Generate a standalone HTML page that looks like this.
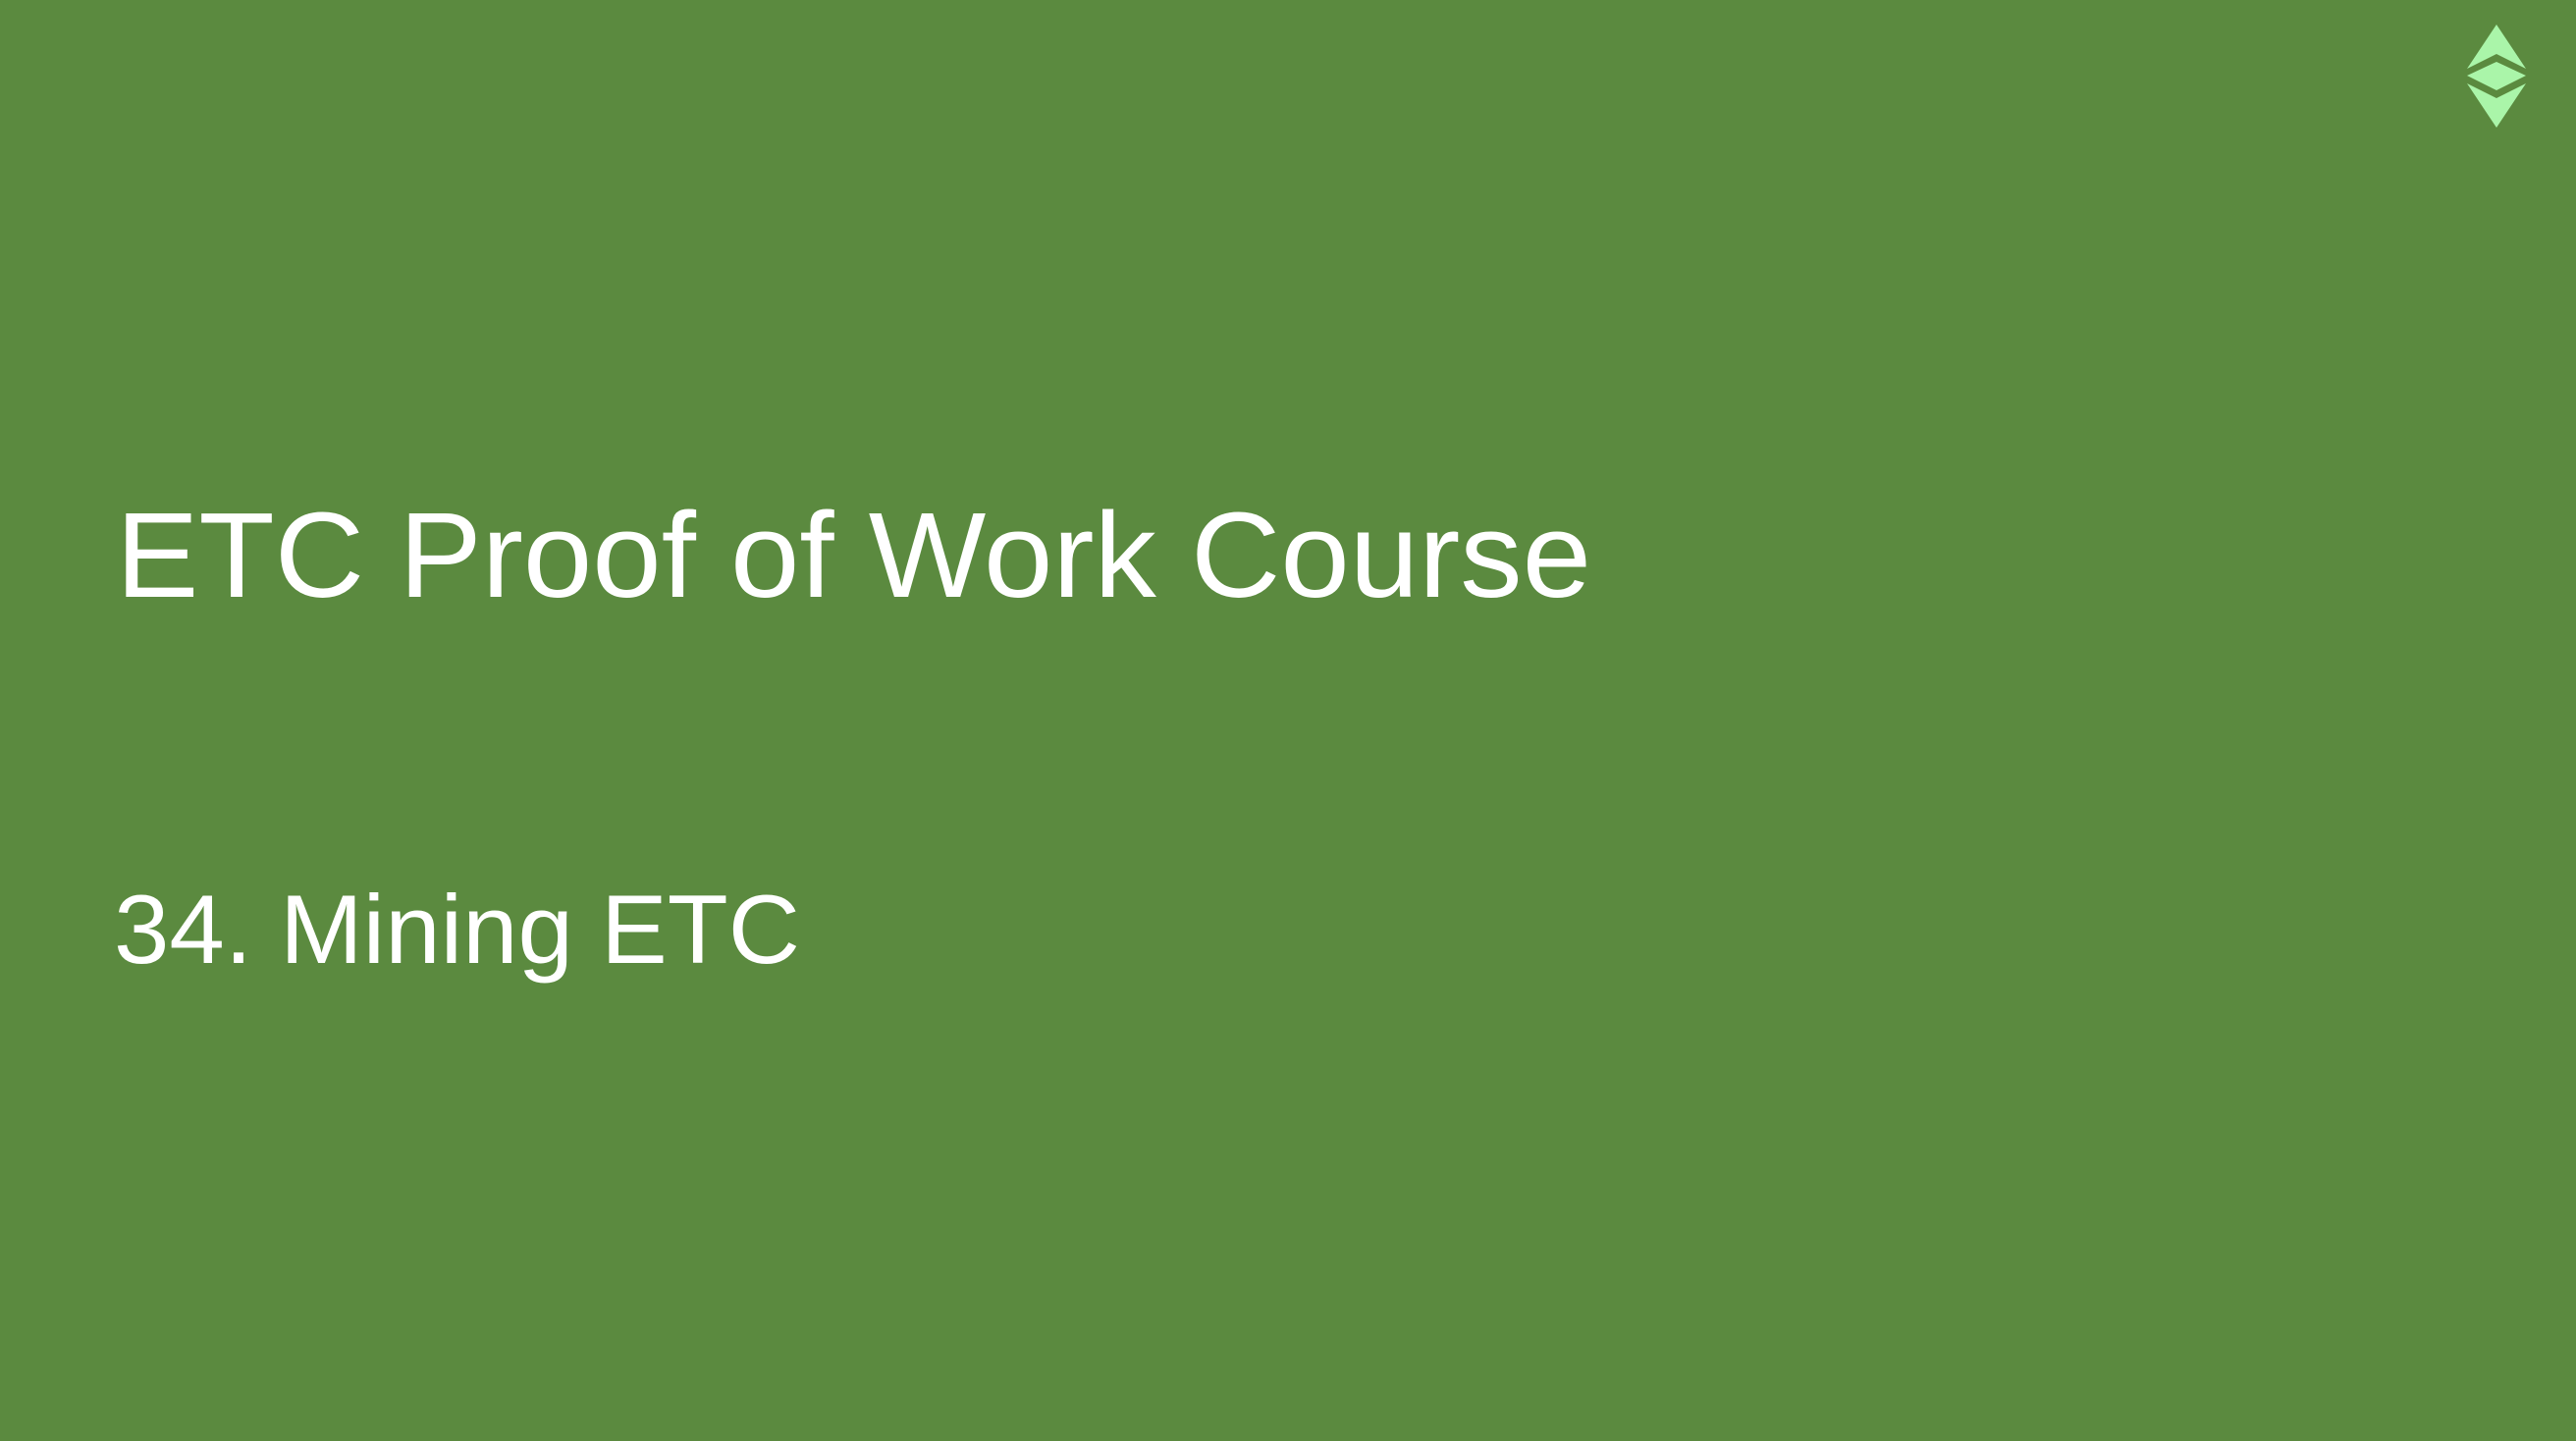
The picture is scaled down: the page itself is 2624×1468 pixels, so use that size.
<!DOCTYPE html>
<html><head><style>
html,body{margin:0;padding:0;background:#5b8a3f;}
svg{display:block}
</style></head><body>
<svg width="2624" height="1468" viewBox="0 0 2624 1468" xmlns="http://www.w3.org/2000/svg">
<rect width="2624" height="1468" fill="#5b8a3f"/>
<text x="118" y="608" font-family="Liberation Sans, sans-serif" font-size="123" fill="#ffffff" textLength="1503" lengthAdjust="spacingAndGlyphs">ETC Proof of Work Course</text>
<text x="116" y="981" font-family="Liberation Sans, sans-serif" font-size="99" fill="#ffffff" textLength="699" lengthAdjust="spacingAndGlyphs">34. Mining ETC</text>
<g fill="#aaf5a9">
<polygon points="2543,25 2573,70 2543,55 2513,70"/>
<polygon points="2513,77 2543,63 2573,77 2543,92"/>
<polygon points="2513,85 2543,100 2573,85 2543,130"/>
</g>
</svg>
</body></html>
